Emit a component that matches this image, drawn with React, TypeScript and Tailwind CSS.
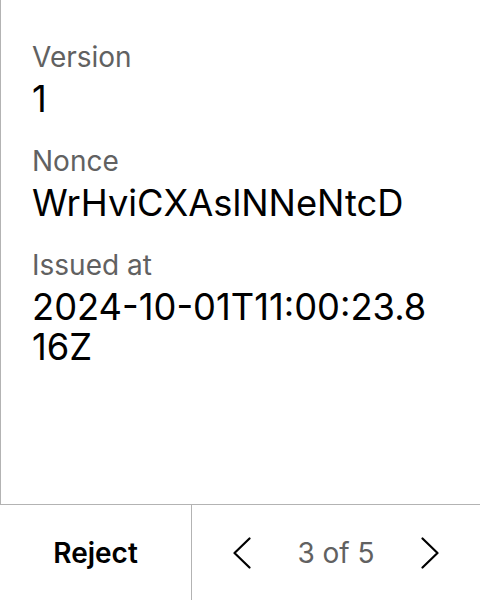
const fields = [
  { label: 'Version', value: '1' },
  { label: 'Nonce', value: 'WrHviCXAslNNeNtcD' },
  { label: 'Issued at', value: '2024-10-01T11:00:23.816Z' },
];

function Chevron({ dir }: { dir: 'left' | 'right' }) {
  const points = dir === 'left' ? '17.5,1.5 2.5,16 17.5,30.5' : '2.5,1.5 17.5,16 2.5,30.5';
  return (
    <svg width="20" height="32" viewBox="0 0 20 32" fill="none" stroke="currentColor" strokeWidth="2.2" strokeLinecap="round" strokeLinejoin="round">
      <polyline points={points} />
    </svg>
  );
}

export default function App() {
  return (
    <div className="flex h-screen w-[480px] flex-col bg-white font-['Inter',sans-serif] text-black">
      <div className="flex-1 border-l border-[#b3b3b3] pl-[31px] pr-[43px] pt-[41px]">
        {fields.map((f) => (
          <div key={f.label} className="mb-[26px]">
            <div className="text-[28px] leading-[32px] text-[#616161]">{f.label}</div>
            <div className="mt-[6px] break-all text-[36.3px] leading-[40px]">{f.value}</div>
          </div>
        ))}
      </div>
      <div className="flex h-[96px] border-t border-[#b3b3b3]">
        <button className="flex w-[192px] items-center justify-center border-r border-[#b3b3b3] text-[28px] font-semibold">
          Reject
        </button>
        <div className="flex flex-1 items-center justify-center gap-[45px]">
          <Chevron dir="left" />
          <span className="text-[28px] text-[#616161]">3 of 5</span>
          <Chevron dir="right" />
        </div>
      </div>
    </div>
  );
}
